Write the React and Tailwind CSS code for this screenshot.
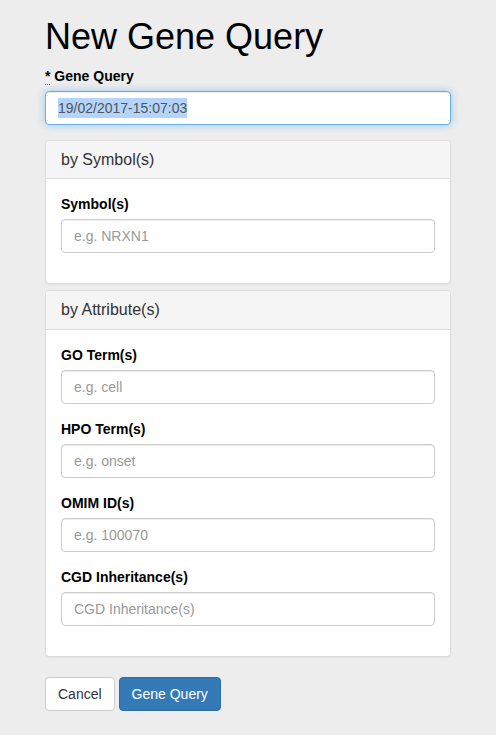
export default function App() {
  const field = (label, placeholder) => (
    <div className="mb-[15px]" key={label}>
      <label className="mb-[5px] block text-[14px] font-bold leading-[20px] text-black">
        {label}
      </label>
      <input
        placeholder={placeholder}
        className="block h-[34px] w-full rounded-[4px] border border-[#ccc] bg-white px-[12px] py-[6px] text-[14px] leading-[20px] text-[#555] shadow-[inset_0_1px_1px_rgba(0,0,0,0.075)] outline-none placeholder:text-[#999]"
      />
    </div>
  );

  return (
    <div
      className="min-h-screen bg-[#ededed] px-[45px] pt-[17px] pb-[25px]"
      style={{ fontFamily: '"Liberation Sans", Arial, sans-serif' }}
    >
      <h1 className="mb-[9px] text-[36px] font-normal leading-[1.1] text-black">
        New Gene Query
      </h1>

      <div className="mb-[15px]">
        <label className="mb-[5px] block text-[14px] font-bold leading-[20px] text-black">
          <abbr className="border-b border-dotted border-[#777] no-underline">*</abbr> Gene Query
        </label>
        <div className="flex h-[34px] w-full items-center rounded-[4px] border border-[#66afe9] bg-white px-[12px] text-[14px] leading-[20px] text-[#555] shadow-[inset_0_1px_1px_rgba(0,0,0,0.075),0_0_8px_rgba(102,175,233,0.6)]">
          <span className="bg-[#b3d4fc]">19/02/2017-15:07:03</span>
        </div>
      </div>

      <div className="mb-[6px] rounded-[4px] border border-[#ddd] bg-white shadow-[0_1px_1px_rgba(0,0,0,0.05)]">
        <div className="rounded-t-[3px] border-b border-[#ddd] bg-[#f5f5f5] px-[15px] py-[10px] text-[16px] leading-[1.1] text-[#333]">
          by Symbol(s)
        </div>
        <div className="p-[15px]">{field("Symbol(s)", "e.g. NRXN1")}</div>
      </div>

      <div className="mb-[20px] rounded-[4px] border border-[#ddd] bg-white shadow-[0_1px_1px_rgba(0,0,0,0.05)]">
        <div className="rounded-t-[3px] border-b border-[#ddd] bg-[#f5f5f5] px-[15px] py-[10px] text-[16px] leading-[1.1] text-[#333]">
          by Attribute(s)
        </div>
        <div className="p-[15px]">
          {field("GO Term(s)", "e.g. cell")}
          {field("HPO Term(s)", "e.g. onset")}
          {field("OMIM ID(s)", "e.g. 100070")}
          {field("CGD Inheritance(s)", "CGD Inheritance(s)")}
        </div>
      </div>

      <div className="flex gap-[4px]">
        <button className="h-[34px] rounded-[4px] border border-[#ccc] bg-white px-[12px] text-[14px] leading-[20px] text-[#333]">
          Cancel
        </button>
        <button className="h-[34px] rounded-[4px] border border-[#2e6da4] bg-[#337ab7] px-[12px] text-[14px] leading-[20px] text-white">
          Gene Query
        </button>
      </div>
    </div>
  );
}
